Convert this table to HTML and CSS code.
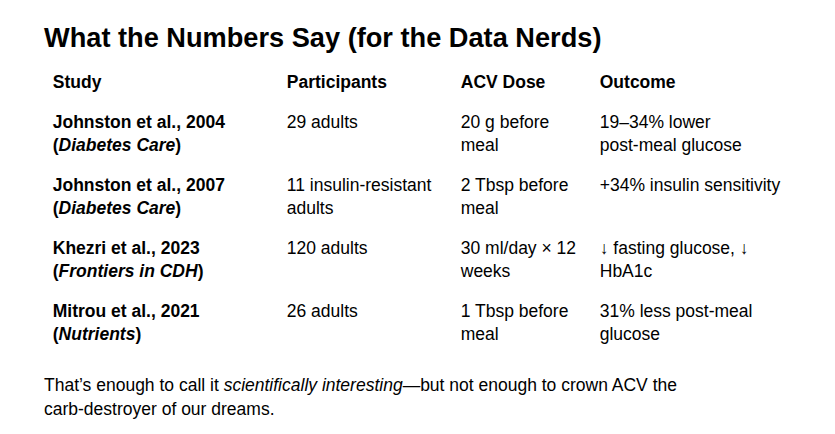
FILE: index.html
```html
<!DOCTYPE html>
<html lang="en">
<head>
<meta charset="utf-8">
<title>What the Numbers Say</title>
<link rel="stylesheet" href="styles.css">
</head>
<body>
<main class="article">
  <h2 class="title">What the Numbers Say (for the Data Nerds)</h2>
  <table class="studies">
    <colgroup>
      <col class="c-study">
      <col class="c-part">
      <col class="c-dose">
      <col class="c-out">
    </colgroup>
    <thead>
      <tr><th>Study</th><th>Participants</th><th>ACV Dose</th><th>Outcome</th></tr>
    </thead>
    <tbody>
      <tr>
        <td><strong>Johnston et al., 2004<br>(<em>Diabetes Care</em>)</strong></td>
        <td>29 adults</td>
        <td>20 g before meal</td>
        <td>19–34% lower<br>post-meal glucose</td>
      </tr>
      <tr>
        <td><strong>Johnston et al., 2007<br>(<em>Diabetes Care</em>)</strong></td>
        <td>11 insulin-resistant adults</td>
        <td>2 Tbsp before meal</td>
        <td>+34% insulin sensitivity</td>
      </tr>
      <tr>
        <td><strong>Khezri et al., 2023<br>(<em>Frontiers in CDH</em>)</strong></td>
        <td>120 adults</td>
        <td>30 ml/day × 12 weeks</td>
        <td>↓ fasting glucose, ↓ HbA1c</td>
      </tr>
      <tr>
        <td><strong>Mitrou et al., 2021<br>(<em>Nutrients</em>)</strong></td>
        <td>26 adults</td>
        <td>1 Tbsp before meal</td>
        <td>31% less post-meal glucose</td>
      </tr>
    </tbody>
  </table>
  <p class="note">That’s enough to call it <em>scientifically interesting</em>—but not enough to crown ACV the carb-destroyer of our dreams.</p>
</main>
</body>
</html>
```

FILE: styles.css
```css
html, body {
  margin: 0;
  padding: 0;
  background: #ffffff;
}

body {
  font-family: "Liberation Sans", Arial, sans-serif;
  color: #000000;
}

.article {
  padding: 22px 0 0 44px;
  width: 700px;
}

.title {
  margin: 0 0 9px;
  font-size: 27.2px;
  font-weight: bold;
  line-height: 31px;
}

.studies {
  border-collapse: collapse;
  font-size: 17.5px;
  line-height: 1.3;
  table-layout: fixed;
  width: 747px;
}

.c-study { width: 234px; }
.c-part { width: 174px; }
.c-dose { width: 139px; }
.c-out { width: 200px; }

.studies th,
.studies td {
  padding: 0.5em;
  text-align: left;
  vertical-align: top;
}

.studies th {
  font-weight: bold;
}

.note {
  margin: 19px 0 0;
  font-size: 17.5px;
  line-height: 24px;
  width: 650px;
}
```
